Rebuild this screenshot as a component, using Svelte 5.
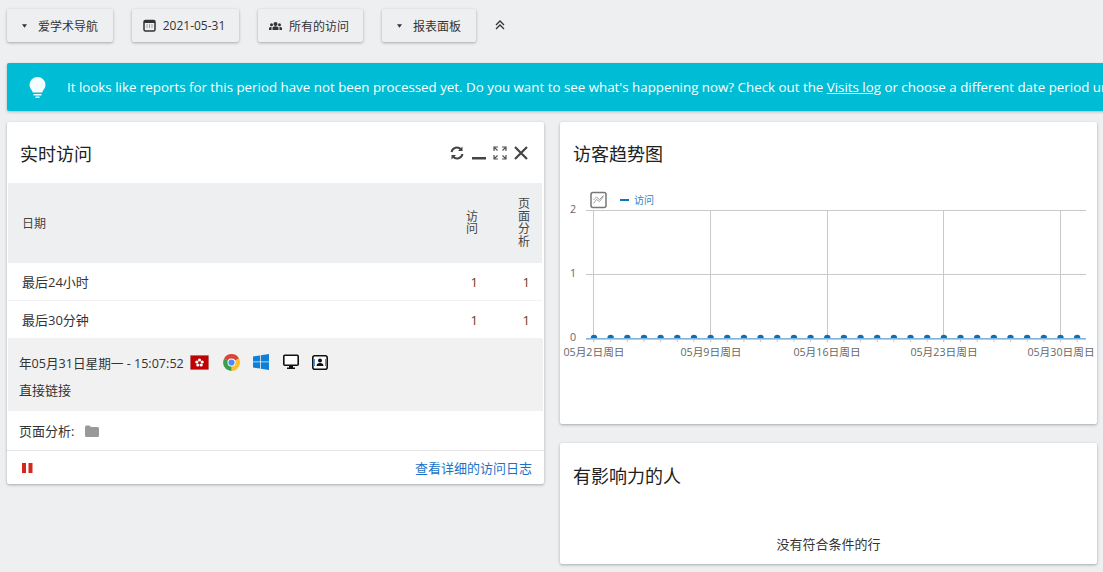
<script>
  const tools = [
    { label: '爱学术导航', icon: 'caret', width: 106 },
    { label: '2021-05-31', icon: 'calendar', width: 107 },
    { label: '所有的访问', icon: 'users', width: 105 },
    { label: '报表面板', icon: 'caret', width: 94 }
  ]

  const rows = [
    { name: '最后24小时', visits: 1, pages: 1 },
    { name: '最后30分钟', visits: 1, pages: 1 }
  ]

  // chart geometry, in page pixels minus the svg origin
  const ox = 560
  const oy = 190
  const gridY = [
    { y: 210 - oy, label: '2' },
    { y: 274 - oy, label: '1' },
    { y: 338 - oy, label: '0' }
  ]
  const gridX = [593, 710, 827, 943, 1060].map((x) => x - ox)
  const points = Array.from({ length: 30 }, (_, i) => 594 + i * 16.66 - ox)
  const dates = [
    { x: 594, label: '05月2日周日' },
    { x: 711, label: '05月9日周日' },
    { x: 827, label: '05月16日周日' },
    { x: 944, label: '05月23日周日' },
    { x: 1061, label: '05月30日周日' }
  ]
</script>

<div class="page">
  <div class="toolbar">
    {#each tools as tool}
      <button class="tool" style="width: {tool.width}px">
        {#if tool.icon === 'caret'}
          <svg class="caret" width="5" height="4" viewBox="0 0 6 4"><path d="M0 0h6L3 4z" fill="#333" /></svg>
        {:else if tool.icon === 'calendar'}
          <svg class="glyph" width="13" height="13" viewBox="0 0 13 13">
            <rect x="1" y="1.500" width="11" height="10.500" rx="1.500" fill="none" stroke="#333" stroke-width="1.500" />
            <rect x="1" y="1.500" width="11" height="2.500" fill="#333" />
            <path d="M3.500 6h1M6 6h1M8.500 6h1M3.500 8h1M6 8h1M8.500 8h1" stroke="#555" stroke-width="1" />
          </svg>
        {:else}
          <svg class="glyph" width="13" height="10" viewBox="0 0 13 10">
            <circle cx="6.500" cy="3" r="2" fill="#333" /><circle cx="2.500" cy="3.800" r="1.500" fill="#333" /><circle cx="10.500" cy="3.800" r="1.500" fill="#333" />
            <path d="M3.500 9V7q0-1.800 3-1.800T9.500 7v2zM0 9V7.200q0-1.500 2.500-1.500V9zM13 9V7.200q0-1.500-2.500-1.500V9z" fill="#333" />
          </svg>
        {/if}
        <span>{tool.label}</span>
      </button>
    {/each}
    <svg class="collapse" width="10" height="10" viewBox="0 0 10 10" fill="none" stroke="#333" stroke-width="1.300">
      <path d="M1 5l4-4 4 4M1 9l4-4 4 4" />
    </svg>
  </div>

  <div class="banner">
    <svg class="bulb" width="17" height="21" viewBox="0 0 17 21">
      <path d="M8.500 0a8 8 0 0 0-8 8c0 3.300 2.500 4.700 3.300 7.500h9.400c.8-2.800 3.300-4.200 3.300-7.500a8 8 0 0 0-8-8z" fill="#f4fdff" />
      <path d="M4.500 17h8v1.500h-8zM6.500 19.500h4V21h-4z" fill="#f4fdff" />
    </svg>
    <p>It looks like reports for this period have not been processed yet. Do you want to see what's happening now? Check out the <u>Visits log</u> or choose a different date period until the reports are ready.</p>
  </div>

  <div class="columns">
    <section class="card live">
      <header class="card-head">
        <h2>实时访问</h2>
        <div class="actions">
          <svg class="refresh" width="14" height="14" viewBox="0 0 14 14" fill="none" stroke="#444" stroke-width="2">
            <path d="M1.500 6A5.500 5.500 0 0 1 11 3.500M12.500 8A5.500 5.500 0 0 1 3 10.500" />
            <path d="M12.500 0.500v4.500H8zM1.500 13.500V9H6z" fill="#444" stroke="none" />
          </svg>
          <svg width="14" height="14" viewBox="0 0 14 14"><rect y="11" width="14" height="2.500" fill="#444" /></svg>
          <svg width="14" height="14" viewBox="0 0 14 14" fill="none" stroke="#555" stroke-width="1.200">
            <path d="M1 5V1h4M1 1l3.500 3.500M9 1h4v4M13 1L9.500 4.500M1 9v4h4M1 13l3.500-3.500M9 13h4V9M13 13L9.500 9.500" />
          </svg>
          <svg width="14" height="14" viewBox="0 0 14 14" stroke="#444" stroke-width="2.200"><path d="M1 1l12 12M13 1L1 13" /></svg>
        </div>
      </header>

      <div class="thead">
        <span class="date-col">日期</span>
        <span class="num narrow visits">访问</span>
        <span class="num narrow pages">页面分析</span>
      </div>
      {#each rows as row}
        <div class="row">
          <span class="date-col">{row.name}</span>
          <span class="num visits">{row.visits}</span>
          <span class="num pages">{row.pages}</span>
        </div>
      {/each}

      <div class="visit">
        <div class="visit-line">
          <span>年05月31日星期一 - 15:07:52</span>
          <svg class="flag" width="19" height="15" viewBox="0 0 19 15">
            <rect width="19" height="15" fill="#c00000" stroke="#ccc" />
            <g fill="#fff">
              <circle cx="9.500" cy="5" r="1.600" /><circle cx="12.200" cy="7" r="1.600" /><circle cx="11.200" cy="10" r="1.600" /><circle cx="7.800" cy="10" r="1.600" /><circle cx="6.800" cy="7" r="1.600" />
            </g>
            <circle cx="9.500" cy="7.800" r="0.800" fill="#c00000" />
          </svg>
          <svg class="chrome" width="17" height="17" viewBox="0 0 17 17">
            <path d="M8.500 8.500L1.100 4.500A8.500 8.500 0 0 1 16 4.500z" fill="#db4437" />
            <path d="M8.500 8.500L16 4.500A8.500 8.500 0 0 1 8.500 17z" fill="#fbc02d" />
            <path d="M8.500 8.500V17A8.500 8.500 0 0 1 1.100 4.500z" fill="#3e9e4e" />
            <circle cx="8.500" cy="8.500" r="4" fill="#fff" /><circle cx="8.500" cy="8.500" r="3.100" fill="#4c8bf5" />
          </svg>
          <svg class="win" width="16" height="16" viewBox="0 0 16 16" fill="#0f80d8">
            <path d="M0 2.500L7 1.400V7.500H0zM7.800 1.300L16 0V7.500H7.800zM0 8.300H7V14.500L0 13.500zM7.800 8.300H16V16L7.800 14.700z" />
          </svg>
          <svg class="monitor" width="16" height="16" viewBox="0 0 16 16">
            <rect x="0.800" y="1.200" width="14.400" height="10" rx="1" fill="#fff" stroke="#111" stroke-width="1.600" />
            <path d="M6 12h4v1.500h2V15H4v-1.500h2z" fill="#111" />
          </svg>
          <svg class="contact" width="16" height="15" viewBox="0 0 16 15">
            <rect x="0.800" y="0.800" width="14.400" height="13.400" rx="2" fill="#fff" stroke="#111" stroke-width="1.600" />
            <circle cx="8" cy="5.500" r="2" fill="#111" /><path d="M4.500 11q0-3 3.500-3t3.500 3z" fill="#111" />
            <path d="M2.500 4v7M13.500 4v7" stroke="#1a73c8" stroke-width="0.800" />
          </svg>
        </div>
        <div class="referrer">直接链接</div>
      </div>

      <div class="pages-line">
        <span>页面分析:</span>
        <svg width="14" height="12" viewBox="0 0 14 12"><path d="M0 2q0-1.500 1.500-1.500h3L6 2h6.500Q14 2 14 3.500v7q0 1.500-1.500 1.500h-11Q0 12 0 10.500z" fill="#999" /></svg>
      </div>

      <footer class="foot">
        <svg width="11" height="10" viewBox="0 0 11 10" fill="#d4291f"><rect width="4" height="10" /><rect x="6.500" width="4" height="10" /></svg>
        <a href="#log">查看详细的访问日志</a>
      </footer>
    </section>

    <div class="side">
      <section class="card trend">
        <h2>访客趋势图</h2>
        <svg class="chart" width="537" height="190" viewBox="0 0 537 190">
          <defs>
            <clipPath id="above-axis"><rect x="0" y="0" width="537" height="148" /></clipPath>
          </defs>
          <rect x="31" y="2.500" width="15" height="15" rx="2" fill="none" stroke="#777" stroke-width="1.500" />
          <path d="M33.500 13.500l3-4 3 2 4-5M33.500 10l3-3 3 2.500 4-4" fill="none" stroke="#888" stroke-width="0.800" />
          <rect x="60" y="9" width="9" height="2" fill="#0f75bd" />
          <text x="74" y="14" class="legend">访问</text>

          {#each gridY as line}
            <line x1="26" x2="526" y1={line.y + 0.5} y2={line.y + 0.5} stroke="#c9c9c9" />
            <text x="16" y={line.y + 3} class="tick" text-anchor="end">{line.label}</text>
          {/each}
          {#each gridX as x}
            <line x1={x + 0.5} x2={x + 0.5} y1="20" y2="152" stroke="#c9c9c9" />
          {/each}
          {#each points as x}
            <line x1={x} x2={x} y1="149" y2="152" stroke="#c9c9c9" />
          {/each}
          <rect x="26" y="148" width="500" height="1" fill="#7fb5dc" />
          <rect x="26" y="149" width="500" height="1" fill="#c9c9c9" />
          <g clip-path="url(#above-axis)">
            {#each points as x}
              <circle cx={x} cy="148" r="3.200" fill="#0f6fb5" />
            {/each}
          </g>
          {#each dates as d}
            <text x={d.x - ox} y="166" class="tick" text-anchor="middle">{d.label}</text>
          {/each}
        </svg>
      </section>

      <section class="card people">
        <h2>有影响力的人</h2>
        <p>没有符合条件的行</p>
      </section>
    </div>
  </div>
</div>

<style>
  :global(body) {
    margin: 0;
    background: #eeeff1;
    overflow: hidden;
  }

  .page {
    height: 572px;
    overflow: hidden;
    padding-left: 7px;
    font-family: "Open Sans", "Noto Sans CJK SC", sans-serif;
    font-size: 12px;
    color: #333;
  }

  .toolbar {
    display: flex;
    align-items: flex-start;
    gap: 19px;
    padding-top: 9px;
    height: 63px;
    margin-bottom: -9px;
  }

  .tool {
    display: flex;
    align-items: center;
    justify-content: center;
    gap: 7px;
    height: 33px;
    padding: 0;
    border: none;
    border-radius: 2px;
    background: #eeeff1;
    box-shadow: 0 1px 3px rgba(0, 0, 0, 0.3);
    font: inherit;
    color: #333;
  }

  .toolbar svg {
    flex: none;
  }

  .caret {
    margin-right: 4px;
  }

  .glyph {
    margin-left: -3px;
  }

  .collapse {
    margin-top: 11px;
  }

  .banner {
    display: flex;
    align-items: center;
    gap: 21px;
    height: 48px;
    width: 1300px;
    padding-left: 22px;
    box-sizing: border-box;
    border-radius: 2px;
    background: #00bcd4;
    box-shadow: 0 1px 3px rgba(0, 0, 0, 0.25);
    color: #fff;
    font-size: 13.33px;
  }

  .bulb {
    flex: none;
  }

  .banner p {
    margin: 0;
    white-space: nowrap;
  }

  .columns {
    display: grid;
    grid-template-columns: 537px 537px;
    gap: 16px;
    align-items: start;
    margin-top: 11px;
  }

  .card {
    background: #fff;
    border-radius: 2px;
    box-shadow: 0 1px 3px rgba(0, 0, 0, 0.3);
  }

  h2 {
    margin: 0;
    font-size: 18px;
    font-weight: 400;
    color: #212121;
  }

  .card-head {
    display: flex;
    align-items: center;
    justify-content: space-between;
    height: 61px;
    padding: 0 16px 0 13px;
  }

  .actions {
    display: flex;
    gap: 7px;
  }

  .refresh {
    margin-right: 1px;
  }

  .thead,
  .row {
    display: flex;
    align-items: center;
    margin: 0 2px 0 1px;
    padding: 0 12px 0 14px;
  }

  .thead {
    height: 80px;
    background: #eeeff1;
    color: #444;
  }

  .row {
    height: 38px;
    box-sizing: border-box;
    border-bottom: 1px solid #f2f2f2;
    color: #333;
    font-size: 13px;
  }

  .date-col {
    flex: 1;
  }

  .num {
    text-align: right;
    color: #6b3d10;
  }

  .visits {
    width: 12px;
    margin-right: 40px;
  }

  .pages {
    width: 12px;
  }

  .narrow {
    line-height: 12.5px;
    color: #444;
    word-break: break-all;
  }

  .visit {
    height: 72px;
    box-sizing: border-box;
    margin: 0 1px;
    padding: 14px 11px 0;
    background: #f1f1f1;
    font-size: 13px;
  }

  .visit-line {
    display: flex;
    align-items: center;
    height: 18px;
  }

  .visit-line span {
    width: 171px;
    white-space: nowrap;
    font-size: 12.6px;
  }

  .chrome {
    margin-left: 14px;
  }

  .win {
    margin-left: 13px;
  }

  .monitor {
    margin-left: 14px;
  }

  .contact {
    margin-left: 13px;
  }

  .referrer {
    margin-top: 9px;
  }

  .pages-line {
    display: flex;
    align-items: center;
    gap: 11px;
    height: 40px;
    padding: 0 12px;
    box-sizing: border-box;
    border-bottom: 1px solid #e5e5e5;
    font-size: 13px;
  }

  .foot {
    display: flex;
    align-items: center;
    justify-content: space-between;
    height: 33px;
    padding: 0 12px 0 15px;
  }

  .foot a {
    color: #1a73c8;
    font-size: 13px;
    text-decoration: none;
  }

  .side {
    display: flex;
    flex-direction: column;
    gap: 19px;
  }

  .trend {
    height: 302px;
  }

  .trend h2,
  .people h2 {
    padding: 20px 0 0 13px;
    line-height: 25px;
  }

  .people h2 {
    padding-top: 21px;
  }

  .chart {
    display: block;
    margin-top: 23px;
  }

  .chart text {
    font-family: "Open Sans", "Noto Sans CJK SC", sans-serif;
  }

  .tick {
    font-size: 10.7px;
    fill: #666;
  }

  .legend {
    font-size: 10px;
    fill: #2f86c5;
  }

  .people {
    height: 121px;
  }

  .people p {
    margin: 45px 0 0;
    text-align: center;
    font-size: 13px;
    color: #333;
  }
</style>
